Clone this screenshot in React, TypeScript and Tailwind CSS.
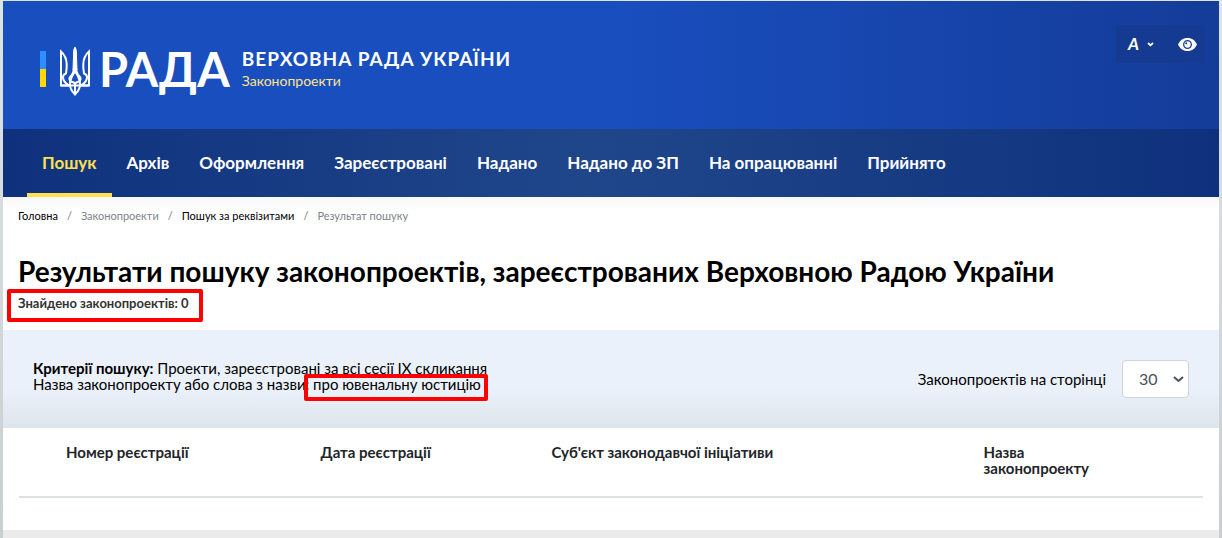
import type { ReactNode } from "react";

const NAV_ITEMS = [
  "Пошук",
  "Архів",
  "Оформлення",
  "Зареєстровані",
  "Надано",
  "Надано до ЗП",
  "На опрацюванні",
  "Прийнято",
];

const BREADCRUMBS: { label: string; href?: string }[] = [
  { label: "Головна", href: "#home" },
  { label: "Законопроекти" },
  { label: "Пошук за реквізитами", href: "#search" },
  { label: "Результат пошуку" },
];

const PAGE_SIZES = [10, 20, 30, 50, 100];

export default function App() {
  return (
    <div className="min-h-screen bg-linear-to-b from-[#dde4e8] to-[#c9ced1] px-[3px] pt-px font-['Lato','Open_Sans',sans-serif] text-black">
      <div className="bg-[#ebebeb]">
        <Header />
        <Navigation />
        <main>
          <div className="bg-white bg-linear-to-b from-[#f8f8f8] to-white to-10% px-[15px] pb-[11px]">
            <Breadcrumbs />
            <h1 className="mt-[30px] font-bold text-[28px] leading-8">
              Результати пошуку законопроектів, зареєстрованих Верховною Радою
              України
            </h1>
            <p className="font-bold text-[#333] text-[13px] leading-8">
              <Marked className="-top-[6px] -right-[14px] -bottom-[11px] -left-[11px]">
                Знайдено законопроектів: 0
              </Marked>
            </p>
          </div>
          <Criteria />
          <Results />
        </main>
        <div className="h-[9px] bg-[#ebebeb]" />
      </div>
    </div>
  );
}

function Header() {
  return (
    <header className="flex h-32 items-start justify-between bg-linear-to-r from-[#194ebe] from-50% to-[#143c99] pr-[14px] pl-[37px]">
      <a className="mt-[41px] flex items-center text-white" href="#home">
        <span className="flex h-9 w-[6px] flex-col">
          <span className="flex-1 bg-[#2e8fff]" />
          <span className="flex-1 bg-[#ffd900]" />
        </span>
        <Trident />
        <span className="ml-2 font-bold text-[47px] leading-[52px]">РАДА</span>
        <span className="ml-3 flex flex-col">
          <span className="font-bold text-[19px] leading-6 tracking-wider">
            ВЕРХОВНА РАДА УКРАЇНИ
          </span>
          <span className="text-[#ffe48a] text-[14px] leading-5">
            Законопроекти
          </span>
        </span>
      </a>
      <div className="mt-6 flex h-[38px] items-center bg-[#153a92] text-white">
        <button
          aria-label="Розмір шрифту"
          className="flex h-full items-center gap-2 px-3 font-bold text-[17px] italic"
          type="button"
        >
          A
          <svg className="h-[5px] w-[7px]" fill="none" viewBox="0 0 7 5">
            <path d="M1 1l2.5 2.3L6 1" stroke="currentColor" strokeWidth="1.7" />
          </svg>
        </button>
        <button
          aria-label="Людям із порушенням зору"
          className="h-full pr-2 pl-3"
          type="button"
        >
          <svg className="h-[13px] w-[19px]" viewBox="0 0 19 13">
            <path
              d="M9.5 0C5 0 1.6 2.7 0 6.5 1.6 10.3 5 13 9.5 13s7.9-2.7 9.5-6.5C17.4 2.7 14 0 9.5 0z"
              fill="currentColor"
            />
            <circle
              cx="9.5"
              cy="6.5"
              fill="none"
              r="3.8"
              stroke="#153a92"
              strokeWidth="1.3"
            />
            <circle cx="8.2" cy="5.2" fill="#153a92" r="1" />
          </svg>
        </button>
      </div>
    </header>
  );
}

function Trident() {
  return (
    <svg
      className="mt-1 ml-[13px] h-[50px] w-8"
      fill="none"
      stroke="currentColor"
      strokeWidth="2"
      viewBox="0 0 32 50"
    >
      <path
        d="M16 1c-1.8 3-1.6 6-1.5 10l-.5 13h4l-.5-13c.1-4 .3-7-1.5-10z"
        fill="currentColor"
        strokeWidth="1"
      />
      <path d="M15 22c-.5 4-1.5 6.5-3.5 8.500-1.5 1.500-1.500 4 .5 5 1.500.8 4 .5 4 3v9" />
      <path d="M17 22c.5 4 1.500 6.500 3.500 8.500 1.500 1.500 1.500 4-.5 5-1.500.8-4 .5-4 3" />
      <path d="M2 39.500V5.500c4 3.500 5.500 8 5.700 12.500.2 3.500-.2 6.500-.7 9.500-2.200.6-3 2-3 3.800 0 5 5.500 8.200 7.500 8.200z" />
      <path d="M30 39.500V5.500c-4 3.500-5.500 8-5.700 12.500-.2 3.500.2 6.500.7 9.500 2.200.6 3 2 3 3.800 0 5-5.500 8.200-7.500 8.200z" />
      <path d="M2 39.500h28" />
      <path d="M16 25c-2 4-5 7-5 13.500 0 5 2.200 7 5 10 2.800-3 5-5 5-10 0-6.500-3-9.500-5-13.500z" />
    </svg>
  );
}

function Navigation() {
  return (
    <nav className="bg-linear-to-r from-[#0f317d] via-[#20468a] via-48% to-[#0f317d] px-6">
      <ul className="flex h-[68px]">
        {NAV_ITEMS.map((item, index) => (
          <li key={item}>
            <a
              className={
                index === 0
                  ? "flex h-full items-center border-[#ffe04f] border-y-4 border-t-transparent px-[15px] font-bold text-[#ffe04f] text-[17px]"
                  : "flex h-full items-center px-[15px] font-bold text-[17px] text-white"
              }
              href="#bills"
            >
              {item}
            </a>
          </li>
        ))}
      </ul>
    </nav>
  );
}

function Breadcrumbs() {
  return (
    <ol className="flex pt-[10px] text-[11px] leading-[18px]">
      {BREADCRUMBS.map(({ label, href }, index) => (
        <li className="flex" key={label}>
          {index > 0 && <span className="px-[9px] text-[#6c757d]">/</span>}
          {href ? (
            <a href={href}>{label}</a>
          ) : (
            <span className="text-[#7b838a]">{label}</span>
          )}
        </li>
      ))}
    </ol>
  );
}

function Marked({
  children,
  className,
}: {
  children: ReactNode;
  className: string;
}) {
  return (
    <span className="relative inline-block leading-4">
      {children}
      <span
        className={`pointer-events-none absolute rounded-xs border-4 border-[#fe0000] ${className}`}
      />
    </span>
  );
}

function Criteria() {
  return (
    <section className="flex h-[98px] items-center justify-between bg-linear-to-b from-[#eaf1fa] from-60% to-[#dde4ec] px-[30px]">
      <div className="mb-[6px] text-[15px] leading-4">
        <p>
          <b>Критерії пошуку:</b> Проекти, зареєстровані за всі сесії IX
          скликання
        </p>
        <p>
          Назва законопроекту або слова з назви:{" "}
          <Marked className="-top-[2px] -right-[7px] -bottom-[9px] -left-[9px]">
            про ювенальну юстицію
          </Marked>
        </p>
      </div>
      <div className="flex items-center gap-4 text-[15px]">
        <label htmlFor="pageSize">Законопроектів на сторінці</label>
        <div className="relative">
          <select
            className="h-[38px] w-[67px] appearance-none rounded-sm border border-[#ced4da] bg-white pl-4 text-[#495057] text-base"
            defaultValue={30}
            id="pageSize"
          >
            {PAGE_SIZES.map((size) => (
              <option key={size} value={size}>
                {size}
              </option>
            ))}
          </select>
          <svg
            className="pointer-events-none absolute top-4 right-[5px] h-[7px] w-[11px]"
            fill="none"
            viewBox="0 0 11 7"
          >
            <path d="M1 1l4.5 4L10 1" stroke="#495057" strokeWidth="2" />
          </svg>
        </div>
      </div>
    </section>
  );
}

function Results() {
  return (
    <section className="bg-white px-4 pb-8">
      <table className="w-full table-fixed text-left text-[#212529] text-[15px] leading-4">
        <thead>
          <tr className="h-[69px] border-[#dee2e6] border-b-2 align-top">
            <th className="w-[21.5%] pt-4 pl-[47px]">Номер реєстрації</th>
            <th className="w-[19.5%] pt-4 pl-[47px]">Дата реєстрації</th>
            <th className="w-[36.5%] pt-4 pl-[47px]">
              Суб'єкт законодавчої ініціативи
            </th>
            <th className="pt-4 pr-24 pl-[47px]">Назва законопроекту</th>
          </tr>
        </thead>
      </table>
    </section>
  );
}
